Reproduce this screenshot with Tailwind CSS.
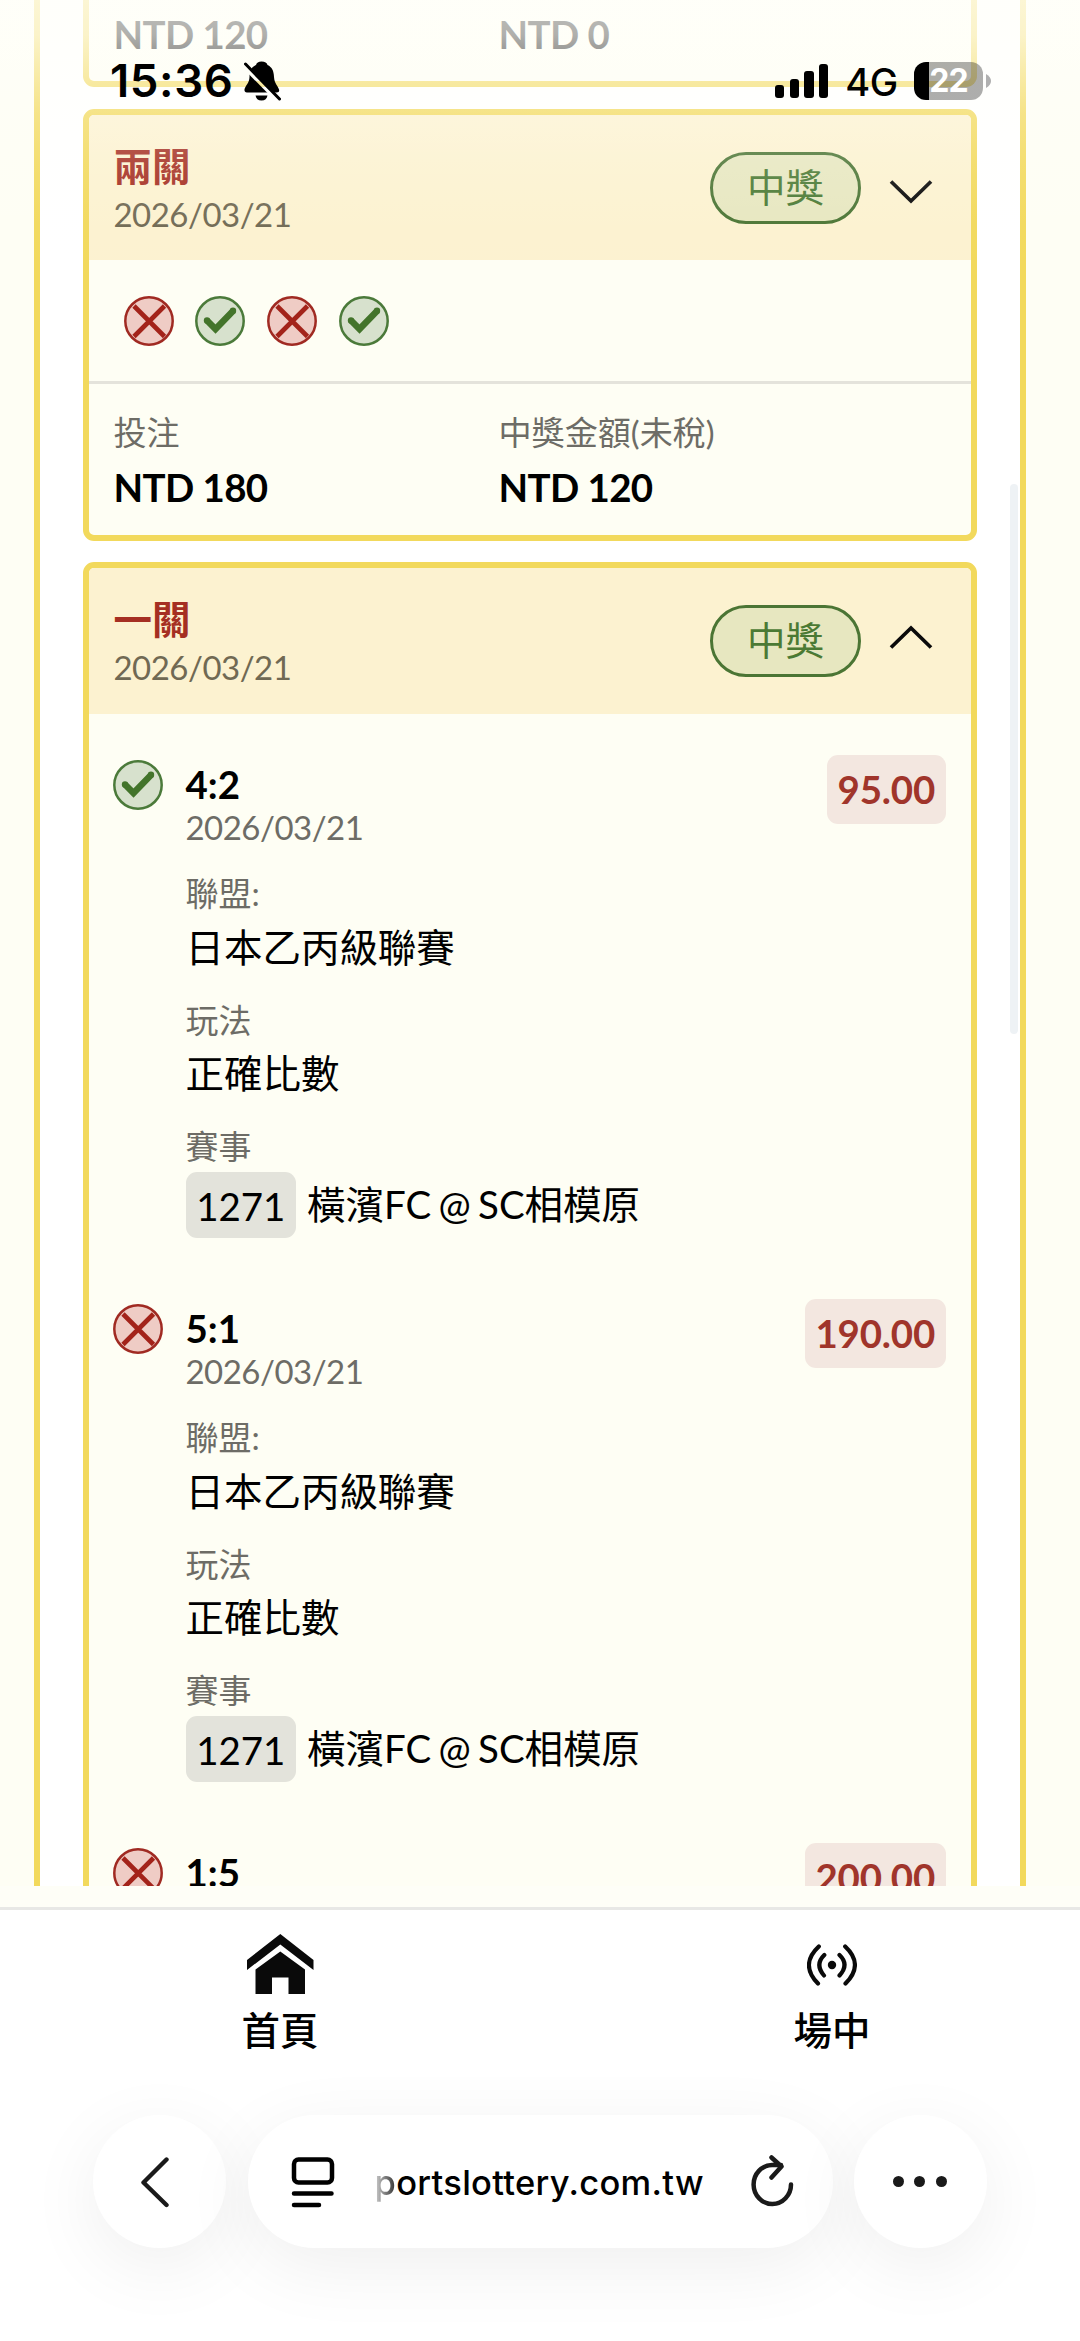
<!DOCTYPE html>
<html lang="zh-Hant">
<head>
<meta charset="utf-8">
<title>運動彩券</title>
<script src="https://cdn.jsdelivr.net/npm/@tailwindcss/browser@4"></script>
</head>
<body class="relative w-[1080px] h-[2341px] overflow-hidden bg-white text-black font-['Lato','Noto_Sans_CJK_TC',sans-serif] text-[38.470px]">

<svg class="hidden">
  <symbol id="win" viewBox="0 0 50 50">
    <circle cx="25" cy="25" r="23.7" fill="#d7e1cd" stroke="#4b7a3a" stroke-width="2.5"/>
    <path d="M12 24.5L20.5 33L38.5 14.5" fill="none" stroke="#43742b" stroke-width="6.5"/>
    <circle cx="12" cy="24.5" r="3.2" fill="#43742b"/><circle cx="38" cy="14.8" r="3.2" fill="#43742b"/>
  </symbol>
  <symbol id="lose" viewBox="0 0 50 50">
    <circle cx="25" cy="25" r="23.7" fill="#efccc5" stroke="#a02a22" stroke-width="2.5"/>
    <path d="M10 10L40.500 40.500M40.500 10L10 40.500" fill="none" stroke="#a3231a" stroke-width="4.600"/>
  </symbol>
  <symbol id="down" viewBox="0 0 44 26"><path d="M2 2.500L22 22L42 2.500" fill="none" stroke="#0a0a0a" stroke-width="3.700"/></symbol>
  <symbol id="up" viewBox="0 0 44 26"><path d="M2 23.500L22 4L42 23.500" fill="none" stroke="#0a0a0a" stroke-width="3.700"/></symbol>
</svg>

<div class="flex flex-col h-[2341px]">
  <!-- scrolling bet list -->
  <main class="h-[1886px] shrink-0 overflow-hidden bg-[#fefef4] pl-[34px] pr-[54px]">
    <div class="h-full border-x-[6px] border-[#f2d95c] bg-white pl-[43px] pr-[43.500px]">

      <section class="h-[87px] border-[6px] border-t-0 border-[#f2d95c] rounded-b-[11px] bg-[#fefef4] pl-[24.500px] pt-[12px]">
        <div class="flex h-[44px] leading-[44px] font-bold tracking-[-0.600px]">
          <div class="w-[385px]">NTD 120</div><div>NTD 0</div>
        </div>
      </section>

      <section class="mt-[22px] h-[432px] border-[6px] border-[#f2d95c] rounded-[11px] overflow-hidden bg-[#fefef4]">
        <header class="h-[145px] bg-[#fcf2d0] flex pl-[24.500px] pr-[38px]">
          <div class="pt-[28px] flex-1">
            <div class="h-[47px] leading-[46px] font-bold text-[#a52f22]">兩關</div>
            <div class="h-[48px] leading-[48px] text-[32.980px] tracking-[-0.500px] text-[#706953]">2026/03/21</div>
          </div>
          <div class="mt-[37px] mr-[27.500px] w-[151px] h-[72px] rounded-full border-[3px] border-[#4b7534] bg-[#e7e7c0] text-[#4b7a34] text-center leading-[65px]">中獎</div>
          <svg class="mt-[64px] w-[44px] h-[26px]"><use href="#down"/></svg>
        </header>
        <div class="h-[121px] flex gap-[21.700px] pl-[34.500px] pt-[35.500px]">
          <svg class="size-[50px]"><use href="#lose"/></svg>
          <svg class="size-[50px]"><use href="#win"/></svg>
          <svg class="size-[50px]"><use href="#lose"/></svg>
          <svg class="size-[50px]"><use href="#win"/></svg>
        </div>
        <div class="h-[154px] border-t-[3px] border-[#e4e3db] flex pl-[24.500px] pt-[26px]">
          <div class="w-[385px]">
            <div class="h-[44px] leading-[44px] text-[33.100px] text-[#6d6c66]">投注</div>
            <div class="mt-[11px] h-[44px] leading-[44px] font-bold tracking-[-0.600px]">NTD 180</div>
          </div>
          <div>
            <div class="h-[44px] leading-[44px] text-[33.100px] text-[#6d6c66]">中獎金額(未稅)</div>
            <div class="mt-[11px] h-[44px] leading-[44px] font-bold tracking-[-0.600px]">NTD 120</div>
          </div>
        </div>
      </section>

      <section class="mt-[21px] border-[6px] border-[#f2d95c] rounded-[11px] overflow-hidden bg-[#fefef4]">
        <header class="h-[145.500px] bg-[#fcf2d0] flex pl-[24.500px] pr-[38px]">
          <div class="pt-[28px] flex-1">
            <div class="h-[47px] leading-[46px] font-bold text-[#a52f22]">一關</div>
            <div class="h-[48px] leading-[48px] text-[32.980px] tracking-[-0.500px] text-[#706953]">2026/03/21</div>
          </div>
          <div class="mt-[37px] mr-[27.500px] w-[151px] h-[72px] rounded-full border-[3px] border-[#4b7534] bg-[#e7e7c0] text-[#4b7a34] text-center leading-[65px]">中獎</div>
          <svg class="mt-[56px] w-[44px] h-[26px]"><use href="#up"/></svg>
        </header>

        <article class="h-[544px] flex items-start pl-[24px] pr-[24.500px]">
          <svg class="mt-[46.500px] size-[50px] mr-[22.500px]"><use href="#win"/></svg>
          <div class="flex-1 pt-[48.500px]">
            <div class="h-[44px] leading-[44px] font-bold">4:2</div>
            <div class="h-[42px] leading-[42px] text-[32.980px] tracking-[-0.500px] text-[#6d6c66]">2026/03/21</div>
            <div class="mt-[24px] h-[44px] leading-[43px] text-[32.980px] text-[#6d6c66]">聯盟:</div>
            <div class="h-[62px] leading-[62px]">日本乙丙級聯賽</div>
            <div class="mt-[20px] h-[44px] leading-[44px] text-[32.980px] text-[#6d6c66]">玩法</div>
            <div class="h-[62px] leading-[62px]">正確比數</div>
            <div class="mt-[21px] h-[44px] leading-[43px] text-[32.980px] text-[#6d6c66]">賽事</div>
            <div class="mt-[3px] flex h-[66px]">
              <span class="w-[110.500px] rounded-[11px] bg-[#e3e3db] text-center leading-[68px]">1271</span>
              <span class="ml-[11px] leading-[65px] [word-spacing:-2.500px]">橫濱FC @ SC相模原</span>
            </div>
          </div>
          <div class="mt-[41.500px] h-[69px] leading-[69px] px-[11px] rounded-[11px] bg-[#f3e7e0] font-bold tracking-[-0.200px] text-[#a0352b]">95.00</div>
        </article>

        <article class="h-[544px] flex items-start pl-[24px] pr-[24.500px]">
          <svg class="mt-[46.500px] size-[50px] mr-[22.500px]"><use href="#lose"/></svg>
          <div class="flex-1 pt-[48.500px]">
            <div class="h-[44px] leading-[44px] font-bold">5:1</div>
            <div class="h-[42px] leading-[42px] text-[32.980px] tracking-[-0.500px] text-[#6d6c66]">2026/03/21</div>
            <div class="mt-[24px] h-[44px] leading-[43px] text-[32.980px] text-[#6d6c66]">聯盟:</div>
            <div class="h-[62px] leading-[62px]">日本乙丙級聯賽</div>
            <div class="mt-[20px] h-[44px] leading-[44px] text-[32.980px] text-[#6d6c66]">玩法</div>
            <div class="h-[62px] leading-[62px]">正確比數</div>
            <div class="mt-[21px] h-[44px] leading-[43px] text-[32.980px] text-[#6d6c66]">賽事</div>
            <div class="mt-[3px] flex h-[66px]">
              <span class="w-[110.500px] rounded-[11px] bg-[#e3e3db] text-center leading-[68px]">1271</span>
              <span class="ml-[11px] leading-[65px] [word-spacing:-2.500px]">橫濱FC @ SC相模原</span>
            </div>
          </div>
          <div class="mt-[41.500px] h-[69px] leading-[69px] px-[11px] rounded-[11px] bg-[#f3e7e0] font-bold tracking-[-0.200px] text-[#a0352b]">190.00</div>
        </article>

        <article class="h-[544px] flex items-start pl-[24px] pr-[24.500px]">
          <svg class="mt-[46.500px] size-[50px] mr-[22.500px]"><use href="#lose"/></svg>
          <div class="flex-1 pt-[48.500px]">
            <div class="h-[44px] leading-[44px] font-bold">1:5</div>
          </div>
          <div class="mt-[41.500px] h-[69px] leading-[69px] px-[11px] rounded-[11px] bg-[#f3e7e0] font-bold tracking-[-0.200px] text-[#a0352b]">200.00</div>
        </article>
      </section>
    </div>
  </main>

  <div class="h-[21px] shrink-0 bg-[#fefef7]"></div>

  <!-- site tab bar -->
  <nav class="h-[208px] shrink-0 border-t-[3px] border-[#e8e8e6] bg-white flex pl-[4px] font-medium">
    <div class="w-[552px] shrink-0 flex flex-col items-center pt-[23.500px]">
      <svg class="w-[67px] h-[60px]" viewBox="0 0 67 60" fill="#0a0a0a"><path d="M33.300 0L66.500 26V36L33.300 10.500L0 36V26Z"/><path d="M33.300 17.500L58 35.500V60H41.500V43.500H25V60H8.500V35.500Z"/></svg>
      <div class="mt-[10.500px] h-[52px] leading-[52px]">首頁</div>
    </div>
    <div class="w-[552px] shrink-0 flex flex-col items-center pt-[34px]">
      <svg class="w-[50px] h-[42px]" viewBox="0 0 50 42" fill="none" stroke="#0a0a0a" stroke-width="4.200" stroke-linecap="round"><path d="M11.800 2.500Q-7.500 20.500 11 39.500M38.200 2.500Q57.500 20.500 38.500 39.500M17.300 11Q7.500 20.500 17 31.500M32.500 11Q42.500 20.500 32.500 31.500"/><circle cx="25" cy="21" r="4.200" fill="#0a0a0a" stroke="none"/></svg>
      <div class="mt-[18px] h-[52px] leading-[52px]">場中</div>
    </div>
  </nav>

  <!-- browser toolbar -->
  <footer class="flex gap-[21.500px] pl-[93px] font-['Inter',sans-serif]">
    <div class="size-[133px] shrink-0 rounded-full bg-white shadow-[0_18px_75px_rgba(0,0,0,0.065)] flex items-center justify-center">
      <svg class="w-[30px] h-[52px] -ml-[10px]" viewBox="0 0 30 52" fill="none" stroke="#1a1a1a" stroke-width="4.400" stroke-linecap="round" stroke-linejoin="round"><path d="M26.500 3.500L3.500 26.500L26.500 49"/></svg>
    </div>
    <div class="w-[585px] h-[133px] shrink-0 rounded-full bg-white shadow-[0_18px_75px_rgba(0,0,0,0.065)] flex items-center pl-[43px]">
      <svg class="w-[44px] h-[52px]" viewBox="0 0 44 52" fill="none" stroke="#000" stroke-width="4.500" stroke-linecap="round"><rect x="3" y="3.500" width="38" height="23" rx="4.500"/><path d="M3 37.500H40.500M3 49H28"/></svg>
      <div class="ml-[40px] w-[331px] text-[34.500px] leading-[60px] font-medium tracking-[0.300px] whitespace-nowrap mt-[2px]"><span class="bg-linear-to-r from-[#d0d0d0] to-[#333] bg-clip-text text-transparent">p</span>ortslottery.com.tw</div>
      <svg class="ml-[44px] -mt-[4px] w-[44px] h-[54px]" viewBox="0 0 44 54" fill="none" stroke="#1a1a1a" stroke-width="4.500" stroke-linecap="round" stroke-linejoin="round"><path d="M41 31.500A18.700 19.500 0 1 1 22 12H31M21.500 4.500L31.500 13.500L21.500 24.500"/></svg>
    </div>
    <div class="size-[133px] shrink-0 rounded-full bg-white shadow-[0_18px_75px_rgba(0,0,0,0.065)] flex items-center justify-center gap-[10.500px] pr-[2px]">
      <span class="size-[11px] rounded-full bg-[#1a1a1a]"></span><span class="size-[11px] rounded-full bg-[#1a1a1a]"></span><span class="size-[11px] rounded-full bg-[#1a1a1a]"></span>
    </div>
  </footer>
</div>

<!-- scroll indicator -->
<div class="absolute left-[1009.500px] top-[484px] w-[8px] h-[550px] rounded-full bg-[#eef2f5]"></div>

<!-- fade and status bar over the page -->
<div class="absolute inset-x-0 top-0 h-[280px] bg-[linear-gradient(to_bottom,rgba(255,255,250,.76),rgba(255,255,250,.69)_35px,rgba(255,255,250,.42)_85px,rgba(255,255,250,.28)_112px,rgba(255,255,250,.13)_165px,rgba(255,255,250,.03)_225px,rgba(255,255,250,0))]"></div>
<div class="absolute inset-x-0 top-[54px] h-[54px] flex items-center pl-[110px] font-['Inter',sans-serif]">
  <div class="w-[134px] text-[45.500px] leading-[54px] font-semibold tracking-[0.600px] whitespace-nowrap">15:36</div>
  <svg class="w-[37px] h-[40px]" viewBox="0 0 37 40"><mask id="cut"><rect width="37" height="40" fill="#fff"/><path d="M-1.500 3.500L34 39.500" stroke="#000" stroke-width="4.500"/></mask><g mask="url(#cut)"><path d="M17.500 .5C14.500 .5 12.500 2 12 4C7 6 5.500 11 5.500 16C5.500 22 1 25 .5 28.500C.3 30.500 1 31.500 3 31.500H32.500C35 31.500 35.500 30 35 28.500C34 25 30.500 23 30 16C29.800 10 28 6 23.500 4C23 2 21 .5 17.500 .5Z"/><path d="M11.500 34.500H23.500C23 37.500 21 39.500 17.500 39.500C14 39.500 12 37.500 11.500 34.500Z"/></g><path d="M1.500 3L35.500 38" stroke="#000" stroke-width="3" stroke-linecap="round"/></svg>
  <div class="ml-[494px] flex items-end gap-[5.500px] h-[34px]">
    <span class="w-[9.200px] h-[13px] rounded-[3px] bg-black"></span><span class="w-[9.200px] h-[19px] rounded-[3px] bg-black"></span><span class="w-[9.200px] h-[27px] rounded-[3px] bg-black"></span><span class="w-[9.200px] h-[34px] rounded-[3px] bg-black"></span>
  </div>
  <div class="ml-[17px] w-[69px] text-[38px] leading-[54px] mt-px font-medium tracking-[-0.500px]">4G</div>
  <div class="-mt-[1px] w-[68.500px] h-[38px] rounded-[12px] overflow-hidden bg-linear-to-r from-black from-[15.500px] to-black/32 to-[15.500px] text-white text-[32px] leading-[38px] font-bold pl-[15px] tracking-[-1px]">22</div>
  <svg class="ml-[3px] -mt-[1px] w-[5px] h-[14px]" viewBox="0 0 5 14"><path d="M0 0Q5 3 5 7Q5 11 0 14Z" fill="#b0b0b0"/></svg>
</div>
</body>
</html>
